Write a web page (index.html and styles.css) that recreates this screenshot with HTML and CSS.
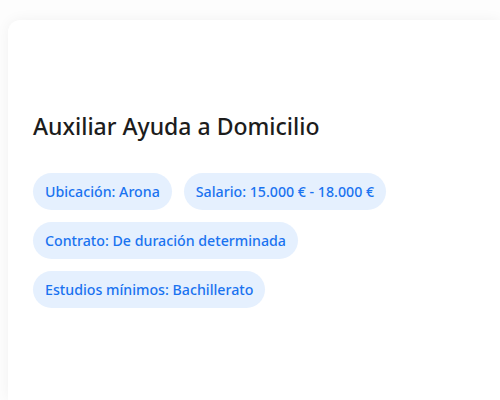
FILE: index.html
```html
<!DOCTYPE html>
<html>
<head>
    <title>Oferta de empleo</title>
    <link rel="stylesheet" href="styles.css">
</head>
<body>
    <div class="job-card">
        <h2 class="job-title">Auxiliar Ayuda a Domicilio</h2>
        <div class="job-tags">
            <span class="tag">Ubicación: Arona</span>
            <span class="tag">Salario: 15.000 € - 18.000 €</span>
            <span class="tag">Contrato: De duración determinada</span>
            <span class="tag">Estudios mínimos: Bachillerato</span>
        </div>
    </div>
</body>
</html>
```

FILE: styles.css
```css
html, body { height: 100%; }
body {
    margin: 0;
    padding: 20px 0 0 8px;
    box-sizing: border-box;
    background: #fdfdfd;
    font-family: "Noto Sans", "Open Sans", sans-serif;
    overflow: hidden;
}
.job-card {
    box-sizing: border-box;
    height: 100%;
    background: white;
    border-radius: 12px 0 0 0;
    box-shadow: 0 0 14px rgba(0,0,0,0.05);
    padding: 91px 25px 0;
}
.job-title {
    margin: 0 0 32px;
    font-size: 23px;
    font-weight: 500;
    line-height: 30px;
    color: #1c1c1c;
}
.job-tags {
    display: flex;
    flex-wrap: wrap;
    gap: 12px;
    width: 370px;
}
.tag {
    background: #e5f0fe;
    color: #1a73f0;
    font-size: 14.2px;
    font-weight: 500;
    line-height: 21px;
    padding: 8px 12px;
    border-radius: 19px;
}
```
